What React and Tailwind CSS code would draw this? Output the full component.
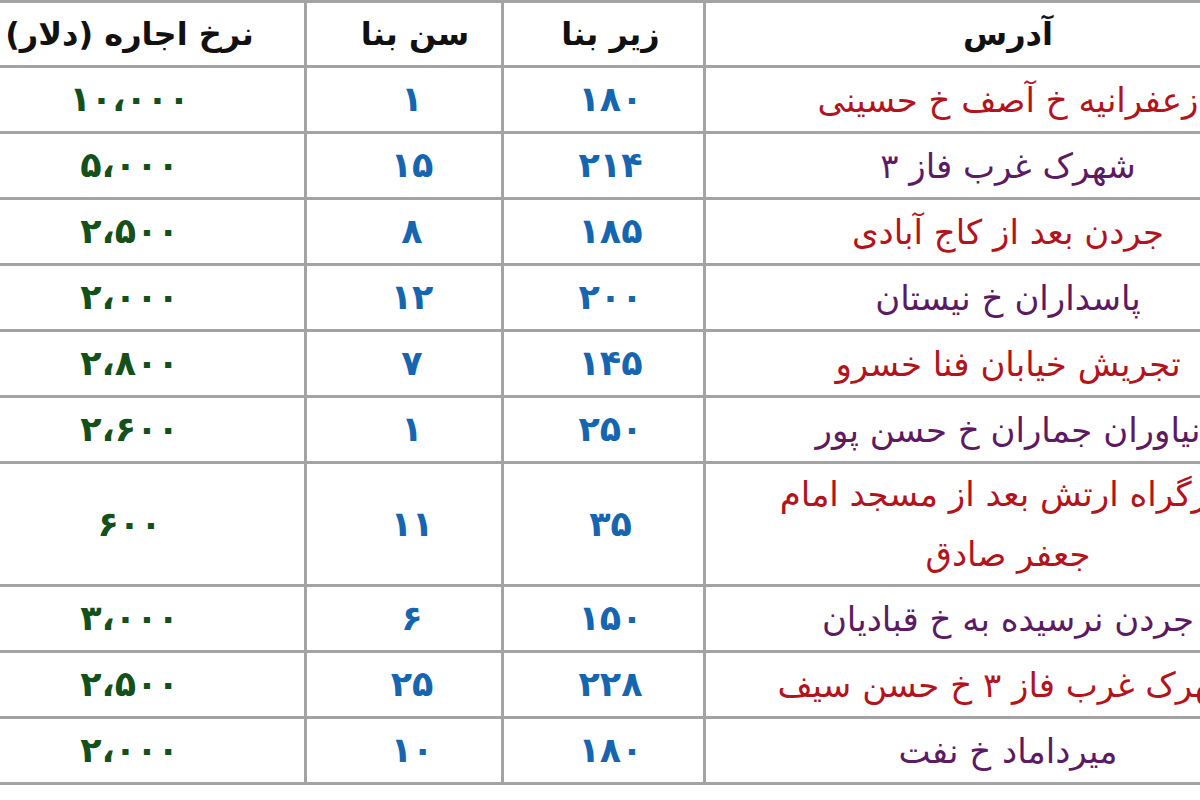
const rows = [
  { address: 'زعفرانیه خ آصف خ حسینی', area: '۱۸۰', age: '۱', rent: '۱۰،۰۰۰' },
  { address: 'شهرک غرب فاز ۳', area: '۲۱۴', age: '۱۵', rent: '۵،۰۰۰' },
  { address: 'جردن بعد از کاج آبادی', area: '۱۸۵', age: '۸', rent: '۲،۵۰۰' },
  { address: 'پاسداران خ نیستان', area: '۲۰۰', age: '۱۲', rent: '۲،۰۰۰' },
  { address: 'تجریش خیابان فنا خسرو', area: '۱۴۵', age: '۷', rent: '۲،۸۰۰' },
  { address: 'نیاوران جماران خ حسن پور', area: '۲۵۰', age: '۱', rent: '۲،۶۰۰' },
  { address: ['بزرگراه ارتش بعد از مسجد امام', 'جعفر صادق'], area: '۳۵', age: '۱۱', rent: '۶۰۰', tall: true },
  { address: 'جردن نرسیده به خ قبادیان', area: '۱۵۰', age: '۶', rent: '۳،۰۰۰' },
  { address: 'شهرک غرب فاز ۳ خ حسن سیف', area: '۲۲۸', age: '۲۵', rent: '۲،۵۰۰' },
  { address: 'میرداماد خ نفت', area: '۱۸۰', age: '۱۰', rent: '۲،۰۰۰' },
];

// shared cell look: grey grid lines like the old html table
const cell = 'border-[3px] border-[#a3a3a3] text-center align-middle p-0 whitespace-nowrap';

export default function App() {
  return (
    <div className="w-[1200px] h-[800px] overflow-hidden bg-white font-['DejaVu_Sans',sans-serif]">
      <table dir="rtl" className="-ml-[48px] w-[1358px] table-fixed border-collapse">
        <colgroup>
          <col className="w-[607px]" />
          <col className="w-[202px]" />
          <col className="w-[197px]" />
          <col className="w-[352px]" />
        </colgroup>
        <thead>
          <tr className="h-[65px] text-[32px] font-bold text-[#111]">
            <th className={cell}>آدرس</th>
            <th className={`${cell} pl-[14px]`}>زیر بنا</th>
            <th className={`${cell} pl-[22px]`}>سن بنا</th>
            <th className={cell}>نرخ اجاره (دلار)</th>
          </tr>
        </thead>
        <tbody>
          {rows.map((r, i) => (
            <tr key={i} className={r.tall ? 'h-[123px]' : 'h-[66px]'}>
              <td className={`${cell} text-[34px] leading-[60px] ${i % 2 === 0 ? 'text-[#b3141c]' : 'text-[#5c1a63]'}`}>
                {Array.isArray(r.address) ? (
                  <>
                    {r.address[0]}
                    <br />
                    {r.address[1]}
                  </>
                ) : (
                  r.address
                )}
              </td>
              <td className={`${cell} pl-[14px] text-[35px] font-bold text-[#1565b0]`}>{r.area}</td>
              <td className={`${cell} pl-[16px] text-[35px] font-bold text-[#1565b0]`}>{r.age}</td>
              <td className={`${cell} text-[35px] font-bold text-[#14501a]`}>{r.rent}</td>
            </tr>
          ))}
        </tbody>
      </table>
    </div>
  );
}
